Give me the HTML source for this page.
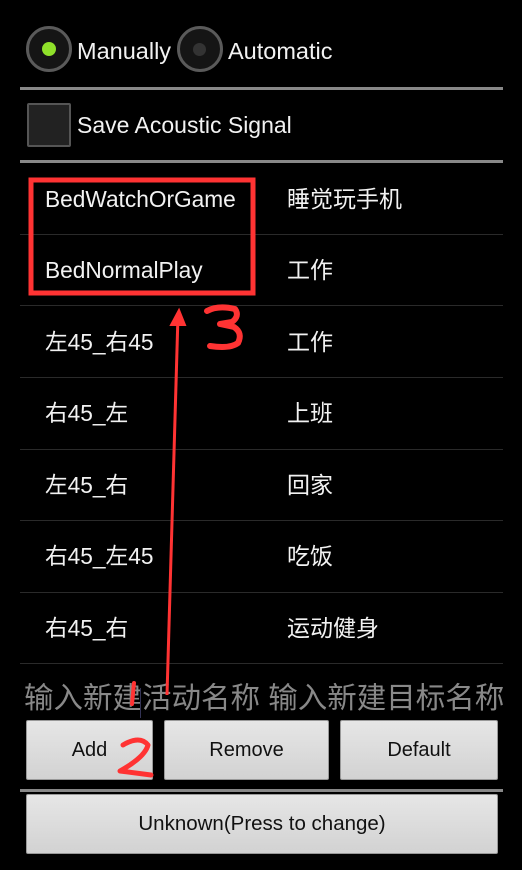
<!DOCTYPE html>
<html><head><meta charset="utf-8"><style>
body{margin:0;width:522px;height:870px;background:#000;position:relative;overflow:hidden;font-family:"Liberation Sans","Noto Sans CJK SC",sans-serif;color:#fff}
.a{position:absolute;white-space:nowrap}
.hl{position:absolute;left:20px;width:483px;height:3px;background:#888}
.dv{position:absolute;left:20px;width:483px;height:1px;background:#2a2a2a}
.t{position:absolute;font-size:22.7px;color:#f2f2f2;line-height:26px;white-space:nowrap}
.c{font-size:23px}
.btn{position:absolute;background:linear-gradient(#e6e6e6,#d2d2d2);border:1px solid #999;border-radius:2px;color:#111;font-size:20px;display:flex;align-items:center;justify-content:center;box-sizing:border-box}
</style></head><body>
<div class="a" style="left:26px;top:26px;width:46px;height:46px;border-radius:50%;background:#151515;border:3px solid #5a5a5a;box-sizing:border-box"></div>
<div class="a" style="left:42px;top:42px;width:14px;height:14px;border-radius:50%;background:#8fe02a"></div>
<div class="t" style="left:77px;top:38px;font-size:23.5px">Manually</div>
<div class="a" style="left:177px;top:26px;width:46px;height:46px;border-radius:50%;background:#151515;border:3px solid #5a5a5a;box-sizing:border-box"></div>
<div class="a" style="left:193px;top:43px;width:13px;height:13px;border-radius:50%;background:#333"></div>
<div class="t" style="left:228px;top:38px;font-size:23.5px">Automatic</div>
<div class="hl" style="top:87px"></div>
<div class="a" style="left:27px;top:103px;width:44px;height:44px;background:#222;border:2px solid #555;box-sizing:border-box;border-radius:2px"></div>
<div class="t" style="left:77px;top:112px;font-size:23px">Save Acoustic Signal</div>
<div class="hl" style="top:160px"></div>

<div class="t" style="left:45px;top:186px">BedWatchOrGame</div><div class="t c" style="left:287px;top:186px">睡觉玩手机</div>
<div class="dv" style="top:234px"></div>
<div class="t" style="left:45px;top:257px">BedNormalPlay</div><div class="t c" style="left:287px;top:257px">工作</div>
<div class="dv" style="top:305px"></div>
<div class="t" style="left:45px;top:329px">左45_右45</div><div class="t c" style="left:287px;top:329px">工作</div>
<div class="dv" style="top:377px"></div>
<div class="t" style="left:45px;top:400px">右45_左</div><div class="t c" style="left:287px;top:400px">上班</div>
<div class="dv" style="top:449px"></div>
<div class="t" style="left:45px;top:472px">左45_右</div><div class="t c" style="left:287px;top:472px">回家</div>
<div class="dv" style="top:520px"></div>
<div class="t" style="left:45px;top:543px">右45_左45</div><div class="t c" style="left:287px;top:543px">吃饭</div>
<div class="dv" style="top:592px"></div>
<div class="t" style="left:45px;top:615px">右45_右</div><div class="t c" style="left:287px;top:615px">运动健身</div>
<div class="dv" style="top:663px"></div>

<div class="t" style="left:24px;top:682px;font-size:29.5px;color:#888;line-height:34px">输入新建活动名称 输入新建目标名称</div>
<div class="a" style="left:140px;top:688px;width:1px;height:30px;background:#335"></div>

<div class="btn" style="left:26px;top:720px;width:127px;height:60px">Add</div>
<div class="btn" style="left:164px;top:720px;width:165px;height:60px">Remove</div>
<div class="btn" style="left:340px;top:720px;width:158px;height:60px">Default</div>
<div class="hl" style="top:789px"></div>
<div class="btn" style="left:26px;top:794px;width:472px;height:60px;font-size:20.5px">Unknown(Press to change)</div>

<svg class="a" style="left:0;top:0" width="522" height="870">
<rect x="31" y="180" width="222" height="113" fill="none" stroke="#f33" stroke-width="5"/>
<path d="M167 695 L178 315" stroke="#f33" stroke-width="3"/>
<path d="M171 325 L179 310 L185 325 Z" fill="#f33" stroke="#f33" stroke-width="2"/>
<path d="M207 311 Q218 305 235 309 Q240 316 232 322 L220 324 L234 327 Q243 333 238 343 Q230 349 210 346" fill="none" stroke="#f33" stroke-width="6" stroke-linecap="round" stroke-linejoin="round"/>
<path d="M134 683 L132 704" stroke="#f33" stroke-width="4" stroke-linecap="round"/>
<path d="M123 745 Q140 735 148 745 Q145 757 120 771 Q135 773 151 775" fill="none" stroke="#f33" stroke-width="5" stroke-linecap="round" stroke-linejoin="round"/>
</svg>
</body></html>
